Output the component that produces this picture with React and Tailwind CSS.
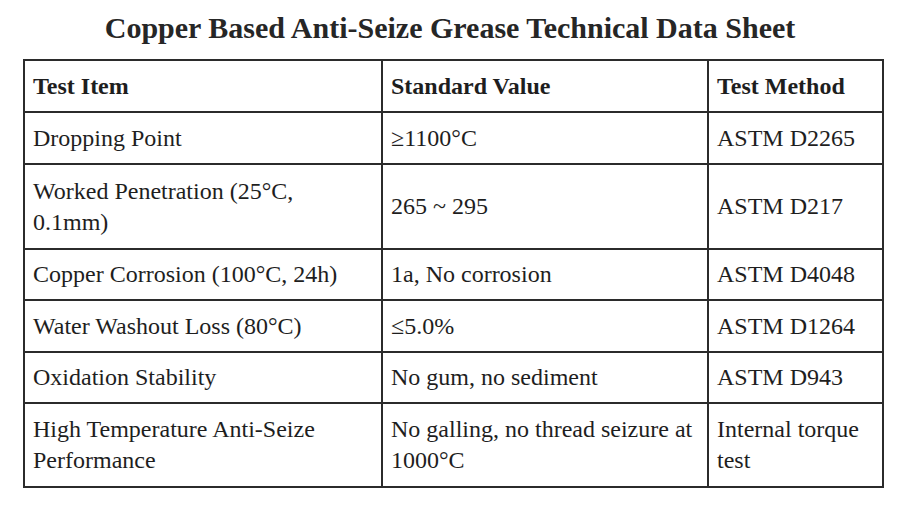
export default function App() {
  const rows = [
    { a: <>Dropping Point</>, b: <>≥1100°C</>, c: <>ASTM D2265</>, h: 'h-[52px]' },
    { a: <>Worked Penetration (25°C,<br />0.1mm)</>, b: <>265 ~ 295</>, c: <>ASTM D217</>, h: 'h-[85px]' },
    { a: <>Copper Corrosion (100°C, 24h)</>, b: <>1a, No corrosion</>, c: <>ASTM D4048</>, h: 'h-[51px]' },
    { a: <>Water Washout Loss (80°C)</>, b: <>≤5.0%</>, c: <>ASTM D1264</>, h: 'h-[52px]' },
    { a: <>Oxidation Stability</>, b: <>No gum, no sediment</>, c: <>ASTM D943</>, h: 'h-[51px]' },
    { a: <>High Temperature Anti-Seize<br />Performance</>, b: <>No galling, no thread seizure at<br />1000°C</>, c: <>Internal torque<br />test</>, h: 'h-[84px]' },
  ];
  const cell = 'border-2 border-[#2b2b2b] pl-[8px] pr-1 align-middle leading-[31px]';
  return (
    <div className="w-[900px] h-[510px] bg-white text-[#1e1e1e] pt-[10px]" style={{ fontFamily: '"Liberation Serif", "Times New Roman", serif' }}>
      <h1 className="text-center font-bold text-[30px] leading-[36px] h-[36px] mb-[13px] text-[#262626]">
        Copper Based Anti-Seize Grease Technical Data Sheet
      </h1>
      <table className="ml-[23px] w-[859px] border-collapse text-[24px] table-fixed">
        <colgroup>
          <col className="w-[358px]" />
          <col className="w-[326px]" />
          <col className="w-[175px]" />
        </colgroup>
        <thead>
          <tr className="h-[52px] font-bold">
            <td className={cell}>Test Item</td>
            <td className={cell}>Standard Value</td>
            <td className={cell}>Test Method</td>
          </tr>
        </thead>
        <tbody>
          {rows.map((r, i) => (
            <tr key={i} className={r.h}>
              <td className={cell}>{r.a}</td>
              <td className={cell}>{r.b}</td>
              <td className={cell}>{r.c}</td>
            </tr>
          ))}
        </tbody>
      </table>
    </div>
  );
}
